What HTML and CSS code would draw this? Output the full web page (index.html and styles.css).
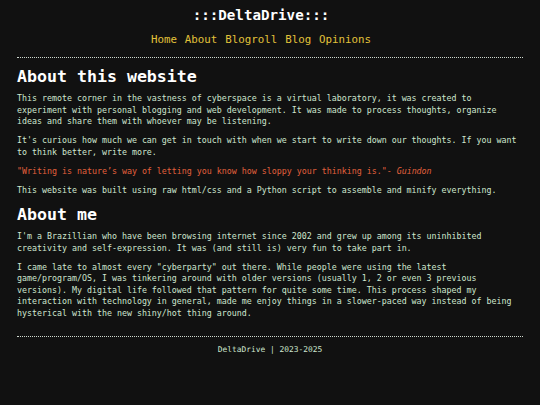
FILE: index.html
```html
<!DOCTYPE html>
<html>
<head>
    <title>DeltaDrive - About</title>
    <link rel="stylesheet" href="styles.css">
</head>
<body>
    <header id="top">
        <div class="site-title">:::DeltaDrive:::</div>
        <nav class="menu">
            <a href="#">Home</a>
            <a href="#">About</a>
            <a href="#">Blogroll</a>
            <a href="#">Blog</a>
            <a href="#">Opinions</a>
        </nav>
    </header>
    <hr class="dots top-line">
    <main id="content">
        <h1>About this website</h1>
        <p>This remote corner in the vastness of cyberspace is a virtual laboratory, it was created to experiment with personal blogging and web development. It was made to process thoughts, organize ideas and share them with whoever may be listening.</p>
        <p>It's curious how much we can get in touch with when we start to write down our thoughts. If you want to think better, write more.</p>
        <p class="quote">"Writing is nature’s way of letting you know how sloppy your thinking is."- <em>Guindon</em></p>
        <p>This website was built using raw html/css and a Python script to assemble and minify everything.</p>
        <h2>About me</h2>
        <p>I'm a Brazillian who have been browsing internet since 2002 and grew up among its uninhibited creativity and self-expression. It was (and still is) very fun to take part in.</p>
        <p>I came late to almost every "cyberparty" out there. While people were using the latest game/program/OS, I was tinkering around with older versions (usually 1, 2 or even 3 previous versions). My digital life followed that pattern for quite some time. This process shaped my interaction with technology in general, made me enjoy things in a slower-paced way instead of being hysterical with the new shiny/hot thing around.</p>
    </main>
    <hr class="dots bottom-line">
    <footer>DeltaDrive | 2023-2025</footer>
</body>
</html>
```

FILE: styles.css
```css
body {
    margin: 0;
    padding: 0 17px;
    background-color: #111111;
    color: #cfe6cf;
    font-family: "DejaVu Sans Mono", monospace;
    font-size: 8.3px;
    line-height: 11.5px;
}
#top {
    text-align: center;
    padding-top: 7px;
    padding-right: 18px;
}
.site-title {
    color: #ffffff;
    font-size: 14.2px;
    font-weight: bold;
    line-height: 16px;
}
.menu {
    margin-top: 11px;
    font-size: 10.8px;
    line-height: 12px;
}
.menu a {
    color: #e2c23a;
    text-decoration: none;
    margin: 0 0.7px;
}
.dots {
    border: none;
    border-top: 1px dotted #cfd8cf;
    margin: 0;
    height: 0;
}
.top-line {
    margin-top: 10.5px;
}
.bottom-line {
    margin-top: 16.5px;
}
h1, h2 {
    color: #ffffff;
    font-weight: bold;
    font-size: 16.6px;
    line-height: 20px;
    margin: 0;
}
h1 {
    margin-top: 9px;
    margin-bottom: 6.5px;
}
h2 {
    margin-top: 8.5px;
    margin-bottom: 6.5px;
}
p {
    margin: 0 0 7.5px 0;
}
.quote {
    color: #e2603c;
}
footer {
    text-align: center;
    font-size: 7.9px;
    padding-top: 7px;
}
```
